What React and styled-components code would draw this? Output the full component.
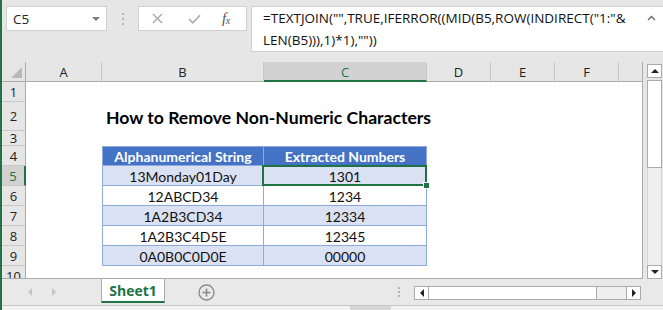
import styled, { createGlobalStyle } from 'styled-components';

const GREEN = '#217346';

const GlobalStyle = createGlobalStyle`
  html, body { margin: 0; padding: 0; }
  body {
    width: 663px;
    height: 310px;
    overflow: hidden;
    background: #e6e6e6;
    font-family: 'Open Sans', 'Noto Sans', sans-serif;
  }
`;

const Window = styled.div`
  width: 661px;
  height: 310px;
  border-left: 2px solid ${GREEN};
  display: flex;
  flex-direction: column;
  background: #e6e6e6;
  overflow: hidden;
`;

/* ---------- formula bar ---------- */

const TopBar = styled.div`
  height: 62px;
  box-sizing: border-box;
  padding: 6px 0 0 4px;
  display: flex;
  align-items: flex-start;
`;

const NameBox = styled.div`
  width: 101px;
  height: 25px;
  box-sizing: border-box;
  background: #fff;
  border: 1px solid #d0d0d0;
  display: flex;
  align-items: center;
  justify-content: space-between;
  padding: 0 6px 0 6px;
  font-size: 13.5px;
  color: #222;
`;

const Grip = styled.div`
  width: 31px;
  height: 25px;
  display: flex;
  flex-direction: column;
  align-items: center;
  justify-content: center;
  gap: 3px;
  span {
    width: 2px;
    height: 2px;
    background: #b4b4b4;
  }
`;

const FuncButtons = styled.div`
  width: 109px;
  height: 25px;
  box-sizing: border-box;
  background: #fff;
  border: 1px solid #d0d0d0;
  display: flex;
  align-items: center;
  padding-left: 13px;
`;

const FuncSlot = styled.div`
  width: ${(p) => p.$w}px;
  display: flex;
  align-items: center;
`;

const Fx = styled.span`
  font-family: 'Liberation Serif', serif;
  font-style: italic;
  font-size: 15px;
  color: #555;
  letter-spacing: -0.5px;
  sub { font-size: 10px; vertical-align: -1px; }
`;

const FormulaBox = styled.div`
  flex: 1;
  margin-left: 4px;
  height: 46px;
  box-sizing: border-box;
  background: #fff;
  border: 1px solid #d0d0d0;
  border-right: none;
  padding: 0 0 0 11px;
  position: relative;
  font-size: 13.5px;
  line-height: 22px;
  color: #111;
  white-space: nowrap;
`;

const Chevron = styled.svg`
  position: absolute;
  right: 7px;
  top: 8px;
`;

/* ---------- sheet ---------- */

const SheetArea = styled.div`
  height: 217px;
  display: flex;
`;

const Viewport = styled.div`
  width: 641px;
  height: 217px;
  overflow: hidden;
  background: #fff;
  box-sizing: border-box;
  border-right: 1px solid #ababab;
  border-bottom: 1px solid #ababab;
`;

const Grid = styled.div`
  display: grid;
  grid-template-columns: 24px 76px 162px 163px repeat(4, 64px);
  grid-template-rows: 20px 20px 29px 15px repeat(7, 20px);
  font-family: Lato, 'Open Sans', sans-serif;
`;

const Corner = styled.div`
  background: #e6e6e6;
  border-right: 1px solid #ababab;
  border-bottom: 1px solid #ababab;
  box-sizing: border-box;
  display: flex;
  align-items: flex-end;
  justify-content: flex-end;
  padding: 0 3px 3px 0;
`;

const ColHead = styled.div`
  box-sizing: border-box;
  background: ${(p) => (p.$active ? '#d2d2d2' : '#e6e6e6')};
  border-right: 1px solid #c8c8c8;
  border-bottom: ${(p) => (p.$active ? `2px solid ${GREEN}` : '1px solid #ababab')};
  color: ${(p) => (p.$active ? GREEN : '#222')};
  font-family: 'Open Sans', sans-serif;
  font-size: 13px;
  display: flex;
  align-items: center;
  justify-content: center;
  padding-top: ${(p) => (p.$active ? 1 : 0)}px;
`;

const RowHead = styled.div`
  box-sizing: border-box;
  background: ${(p) => (p.$active ? '#d2d2d2' : '#e6e6e6')};
  border-bottom: 1px solid #c8c8c8;
  border-right: ${(p) => (p.$active ? `2px solid ${GREEN}` : '1px solid #ababab')};
  color: ${(p) => (p.$active ? GREEN : '#222')};
  font-family: 'Open Sans', sans-serif;
  font-size: 13px;
  display: flex;
  align-items: ${(p) => (p.$clipped ? 'flex-start' : 'center')};
  padding-top: ${(p) => (p.$clipped ? 1 : 0)}px;
  justify-content: center;
`;

const Cell = styled.div`
  position: relative;
  box-sizing: border-box;
  white-space: nowrap;
  font-size: 14px;
  color: #111;
  display: flex;
  align-items: center;
  justify-content: center;
  padding-top: 1px;
`;

const Title = styled(Cell)`
  justify-content: flex-start;
  padding-left: 4px;
  padding-top: 2px;
  font-size: 17.6px;
  font-weight: 700;
  color: #000;
  overflow: visible;
  z-index: 1;
`;

const TableCell = styled(Cell)`
  background: ${(p) => (p.$head ? '#4472c4' : p.$band ? '#d9e1f2' : '#fff')};
  color: ${(p) => (p.$head ? '#fff' : '#111')};
  font-weight: ${(p) => (p.$head ? 700 : 400)};
  border-right: 1px solid #8eaadb;
  border-bottom: 1px solid #8eaadb;
  border-left: ${(p) => (p.$first ? '1px solid #8eaadb' : 'none')};
  border-top: ${(p) => (p.$head ? '1px solid #8eaadb' : 'none')};
`;

const Selection = styled.div`
  position: absolute;
  left: -2px;
  top: -1px;
  right: -1px;
  bottom: -1px;
  border: 2px solid ${GREEN};
  pointer-events: none;
  z-index: 2;
`;

const FillHandle = styled.div`
  position: absolute;
  right: -5px;
  bottom: -5px;
  width: 5px;
  height: 5px;
  background: ${GREEN};
  border: 1px solid #fff;
`;

/* ---------- vertical scrollbar ---------- */

const VScroll = styled.div`
  width: 15px;
  margin-left: 4px;
  padding-top: 2px;
  display: flex;
  flex-direction: column;
`;

const ScrollBtn = styled.div`
  width: 15px;
  height: 14px;
  box-sizing: border-box;
  background: #fff;
  border: 1px solid #ababab;
  display: flex;
  align-items: center;
  justify-content: center;
  flex-shrink: 0;
`;

const VThumb = styled.div`
  height: 88px;
  margin-top: 2px;
  box-sizing: border-box;
  background: #fff;
  border: 1px solid #ababab;
`;

const VTrack = styled.div`
  flex: 1;
  background: #efefef;
  border-left: 1px solid #d6d6d6;
  border-right: 1px solid #d6d6d6;
`;

/* ---------- tabs ---------- */

const TabBar = styled.div`
  height: 26px;
  box-sizing: border-box;
  display: flex;
  align-items: flex-start;
  background: #e9e9e9;
`;

const NavArrows = styled.div`
  width: 99px;
  height: 26px;
  display: flex;
  align-items: center;
  padding-left: 26px;
  box-sizing: border-box;
  gap: 20px;
`;

const SheetTab = styled.div`
  width: 64px;
  height: 24px;
  box-sizing: border-box;
  background: #fff;
  border-left: 1px solid #ababab;
  border-right: 1px solid #ababab;
  border-bottom: 2px solid ${GREEN};
  color: ${GREEN};
  font-weight: 700;
  font-size: 14px;
  display: flex;
  align-items: center;
  justify-content: center;
  padding-top: 1px;
`;

const AddSheet = styled.div`
  margin-left: 33px;
  height: 26px;
  display: flex;
  align-items: center;
`;

const HGrip = styled.div`
  margin-left: 183px;
  height: 26px;
  display: flex;
  flex-direction: column;
  justify-content: center;
  gap: 2px;
  span {
    width: 2px;
    height: 2px;
    background: #b4b4b4;
  }
`;

const HScroll = styled.div`
  margin-left: 14px;
  margin-top: 7px;
  width: 227px;
  height: 14px;
  display: flex;
`;

const HThumb = styled.div`
  width: 168px;
  height: 14px;
  box-sizing: border-box;
  background: #fff;
  border: 1px solid #ababab;
  border-left: none;
`;

const HTrack = styled.div`
  flex: 1;
  background: #efefef;
  border-top: 1px solid #ababab;
  border-bottom: 1px solid #ababab;
`;

const StatusStrip = styled.div`
  flex: 1;
  background: #f2f2f2;
  border-top: 1px solid #c8c8c8;
  display: flex;
`;

const StatusBlock = styled.div`
  margin-left: 348px;
  width: 41px;
  background: #d6d6d6;
`;

/* ---------- data ---------- */

const columns = ['A', 'B', 'C', 'D', 'E', 'F', ''];
const tableRows = [
  ['13Monday01Day', '1301'],
  ['12ABCD34', '1234'],
  ['1A2B3CD34', '12334'],
  ['1A2B3C4D5E', '12345'],
  ['0A0B0C0D0E', '00000'],
];

const Tri = ({ dir, color = '#222', size = 4 }) => {
  const s = size;
  const pts = {
    up: `0,${s} ${s * 2},${s} ${s},0`,
    down: `0,0 ${s * 2},0 ${s},${s}`,
    left: `${s},0 ${s},${s * 2} 0,${s}`,
    right: `0,0 0,${s * 2} ${s},${s}`,
  }[dir];
  const vertical = dir === 'up' || dir === 'down';
  return (
    <svg width={vertical ? s * 2 : s} height={vertical ? s : s * 2}>
      <polygon points={pts} fill={color} />
    </svg>
  );
};

function renderRow(r) {
  const cells = [];
  columns.forEach((c, i) => {
    const key = `${i}-${r}`;
    if (r === 2 && c === 'B') {
      cells.push(<Title key={key}>How to Remove Non-Numeric Characters</Title>);
      return;
    }
    if (r >= 4 && r <= 9 && (c === 'B' || c === 'C')) {
      const head = r === 4;
      const text = head
        ? c === 'B'
          ? 'Alphanumerical String'
          : 'Extracted Numbers'
        : tableRows[r - 5][c === 'B' ? 0 : 1];
      cells.push(
        <TableCell key={key} $head={head} $band={r % 2 === 1} $first={c === 'B'}>
          {text}
          {r === 5 && c === 'C' && (
            <Selection>
              <FillHandle />
            </Selection>
          )}
        </TableCell>
      );
      return;
    }
    cells.push(<Cell key={key} />);
  });
  return cells;
}

export default function App() {
  const rows = [1, 2, 3, 4, 5, 6, 7, 8, 9, 10];
  return (
    <>
      <GlobalStyle />
      <Window>
        <TopBar>
          <NameBox>
            <span>C5</span>
            <Tri dir="down" color="#7a7a7a" size={4} />
          </NameBox>
          <Grip>
            <span />
            <span />
            <span />
          </Grip>
          <FuncButtons>
            <FuncSlot $w={36}>
              <svg width="11" height="11" viewBox="0 0 11 11">
                <path d="M1 1 L10 10 M10 1 L1 10" stroke="#a8a8a8" strokeWidth="1.4" fill="none" />
              </svg>
            </FuncSlot>
            <FuncSlot $w={34}>
              <svg width="13" height="10" viewBox="0 0 13 10">
                <path d="M1 5 L4.8 8.8 L12 1.2" stroke="#a8a8a8" strokeWidth="1.5" fill="none" />
              </svg>
            </FuncSlot>
            <FuncSlot $w={20}>
              <Fx>
                f<sub>x</sub>
              </Fx>
            </FuncSlot>
          </FuncButtons>
          <FormulaBox>
            <div>=TEXTJOIN("",TRUE,IFERROR((MID(B5,ROW(INDIRECT("1:"&amp;</div>
            <div>LEN(B5))),1)*1),""))</div>
            <Chevron width="9" height="6" viewBox="0 0 9 6">
              <path d="M1 5 L4.5 1.5 L8 5" stroke="#666" strokeWidth="1.3" fill="none" />
            </Chevron>
          </FormulaBox>
        </TopBar>

        <SheetArea>
          <Viewport>
            <Grid>
              <Corner>
                <svg width="11" height="11" viewBox="0 0 11 11">
                  <polygon points="0,11 11,11 11,0" fill="#b9b9b9" />
                </svg>
              </Corner>
              {columns.map((c, i) => (
                <ColHead key={i} $active={c === 'C'}>
                  {c}
                </ColHead>
              ))}
              {rows.map((r) => [
                <RowHead key={`h${r}`} $active={r === 5} $clipped={r === 10}>
                  {r}
                </RowHead>,
                ...renderRow(r),
              ])}
            </Grid>
          </Viewport>
          <VScroll>
            <ScrollBtn>
              <Tri dir="up" size={4} />
            </ScrollBtn>
            <VThumb />
            <VTrack />
            <ScrollBtn>
              <Tri dir="down" size={4} />
            </ScrollBtn>
          </VScroll>
        </SheetArea>

        <TabBar>
          <NavArrows>
            <Tri dir="left" color="#c4c4c4" size={4} />
            <Tri dir="right" color="#c4c4c4" size={4} />
          </NavArrows>
          <SheetTab>Sheet1</SheetTab>
          <AddSheet>
            <svg width="17" height="17" viewBox="0 0 17 17">
              <circle cx="8.5" cy="8.5" r="7.5" stroke="#8a8a8a" strokeWidth="1.3" fill="none" />
              <path d="M8.5 4.5 V12.5 M4.5 8.5 H12.5" stroke="#8a8a8a" strokeWidth="1.6" />
            </svg>
          </AddSheet>
          <HGrip>
            <span />
            <span />
            <span />
          </HGrip>
          <HScroll>
            <ScrollBtn>
              <Tri dir="left" size={4} />
            </ScrollBtn>
            <HThumb />
            <HTrack />
            <ScrollBtn>
              <Tri dir="right" size={4} />
            </ScrollBtn>
          </HScroll>
        </TabBar>
        <StatusStrip>
          <StatusBlock />
        </StatusStrip>
      </Window>
    </>
  );
}
